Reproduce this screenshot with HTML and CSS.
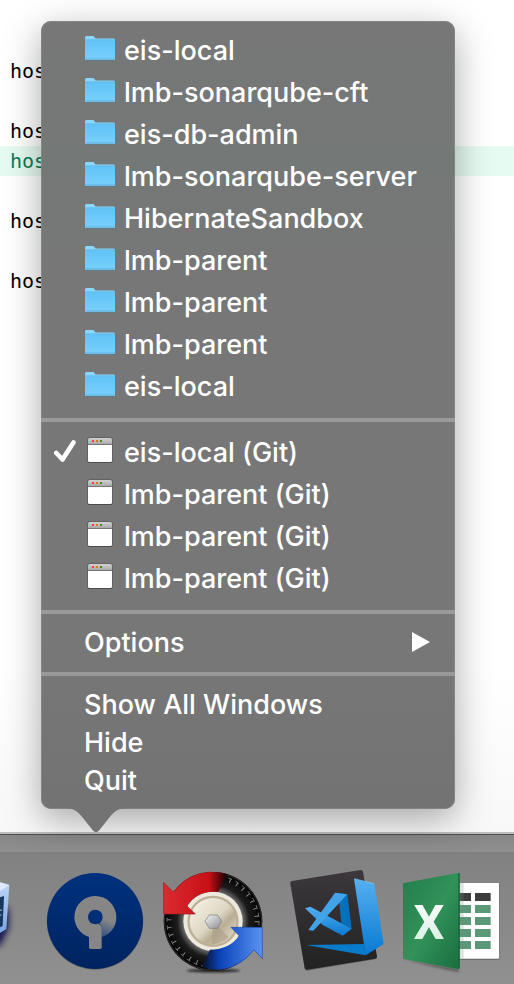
FILE: index.html
```
<!DOCTYPE html>
<html lang="en">
<head>
  <meta charset="UTF-8">
  <meta name="viewport" content="width=device-width, initial-scale=1.0">
  <title>Dock menu</title>
  <link rel="stylesheet" href="styles.css">
</head>
<body>
  <!-- Shared icons -->
  <svg class="defs" width="0" height="0" aria-hidden="true">
    <defs>
      <linearGradient id="folderFill" x1="0" y1="0" x2="0" y2="1">
        <stop offset="0" stop-color="#61c3f7"/>
        <stop offset="1" stop-color="#79d0fb"/>
      </linearGradient>
      <linearGradient id="barFill" x1="0" y1="0" x2="0" y2="1">
        <stop offset="0" stop-color="#d2d2d2"/>
        <stop offset="1" stop-color="#a9a9a9"/>
      </linearGradient>
    </defs>
    <symbol id="folder" viewBox="0 0 30 26">
      <path d="M0 25V2.500Q0 1 1.500 1H7.500Q9 1 9.600 2.200L10.500 3.500H28.500Q30 3.500 30 5V25Z" fill="#8ad8fd"/>
      <path d="M0 5.500H30V24Q30 25 29 25H1Q0 25 0 24Z" fill="url(#folderFill)"/>
      <path d="M0 5H30" stroke="#55b0e2" stroke-width="1"/>
      <path d="M0 23.500H30" stroke="#64b9e5" stroke-width="0.700"/>
      <path d="M0.500 25.200H29.500" stroke="#557d92" stroke-width="0.800"/>
    </symbol>
    <symbol id="window" viewBox="0 0 30 26">
      <rect x="2.500" y="0.500" width="25" height="25.500" rx="2" fill="#4c4c4c"/>
      <path d="M3 8H27V23.500Q27 25 25.500 25H4.500Q3 25 3 23.500Z" fill="#fff"/>
      <path d="M3 7V2.500Q3 1 4.500 1H25.500Q27 1 27 2.500V7Z" fill="url(#barFill)"/>
      <path d="M3 7.500H27" stroke="#777" stroke-width="1"/>
      <rect x="7" y="3" width="2" height="2" fill="#ee3f4c"/>
      <rect x="11" y="3" width="2" height="2" fill="#d4781f"/>
      <rect x="15" y="3" width="2" height="2" fill="#4a8b17"/>
    </symbol>
  </svg>

  <main class="editor">
    <div class="code">
      <div class="line">host</div>
      <div class="line"></div>
      <div class="line">host</div>
      <div class="line added">host</div>
      <div class="line"></div>
      <div class="line">host</div>
      <div class="line"></div>
      <div class="line">host</div>
    </div>

    <nav class="menu">
      <div class="menu-group">
        <button class="item"><svg class="icon"><use href="#folder"/></svg>eis-local</button>
        <button class="item"><svg class="icon"><use href="#folder"/></svg>lmb-sonarqube-cft</button>
        <button class="item"><svg class="icon"><use href="#folder"/></svg>eis-db-admin</button>
        <button class="item"><svg class="icon"><use href="#folder"/></svg>lmb-sonarqube-server</button>
        <button class="item"><svg class="icon"><use href="#folder"/></svg>HibernateSandbox</button>
        <button class="item"><svg class="icon"><use href="#folder"/></svg>lmb-parent</button>
        <button class="item"><svg class="icon"><use href="#folder"/></svg>lmb-parent</button>
        <button class="item"><svg class="icon"><use href="#folder"/></svg>lmb-parent</button>
        <button class="item"><svg class="icon"><use href="#folder"/></svg>eis-local</button>
      </div>
      <div class="menu-group">
        <button class="item checked">
          <svg class="check" viewBox="0 0 22 24"><path d="M2.300 14L8.500 20.500L19.500 3.500" fill="none" stroke="#fff" stroke-width="4.600" stroke-linecap="round" stroke-linejoin="round"/></svg>
          <svg class="icon"><use href="#window"/></svg>eis-local (Git)
        </button>
        <button class="item"><svg class="icon"><use href="#window"/></svg>lmb-parent (Git)</button>
        <button class="item"><svg class="icon"><use href="#window"/></svg>lmb-parent (Git)</button>
        <button class="item"><svg class="icon"><use href="#window"/></svg>lmb-parent (Git)</button>
      </div>
      <div class="menu-group">
        <button class="item plain">Options
          <svg class="more" viewBox="0 0 18 20"><path d="M0 0L18 10L0 20Z" fill="#fff"/></svg>
        </button>
      </div>
      <div class="menu-group">
        <button class="item plain">Show All Windows</button>
        <button class="item plain">Hide</button>
        <button class="item plain">Quit</button>
      </div>
      <svg class="pointer" viewBox="0 0 64 25"><path d="M0 0C11 0 14 4 19 10L29 22.500Q32 26 35 22.500L45 10C50 4 53 0 64 0Z" fill="#737373"/></svg>
    </nav>
  </main>

  <footer class="dock">
    <div class="shelf">
      <!-- VirtualBox -->
      <svg class="app" viewBox="-246 0 354 372">
        <defs>
          <linearGradient id="vbSide" x1="0" y1="0" x2="0" y2="1">
            <stop offset="0" stop-color="#c5dbf8"/>
            <stop offset="1" stop-color="#6f9ce4"/>
          </linearGradient>
          <filter id="soft" x="-50%" y="-50%" width="200%" height="200%"><feGaussianBlur stdDeviation="9"/></filter>
        </defs>
        <path d="M-90 240L0 258L26 205V150L0 130Z" fill="#151550" filter="url(#soft)"/>
        <path d="M-130 90L-60 50L28 75L19 207L-50 250L-130 210Z" fill="url(#vbSide)"/>
        <path d="M-60 50L28 75L0 93L-110 85Z" fill="#dceafc"/>
        <path d="M-30 120L12 108L8 198L-30 215Z" fill="#17375c"/>
        <path d="M-20 155L5 150M-20 168L4 165" stroke="#8da6bc" stroke-width="4"/>
      </svg>

      <!-- SourceTree -->
      <svg class="app" viewBox="108 0 354 372">
        <defs>
          <linearGradient id="stFill" x1="0" y1="0" x2="0" y2="1">
            <stop offset="0" stop-color="#00317e"/>
            <stop offset="1" stop-color="#00235f"/>
          </linearGradient>
          <linearGradient id="stFade" x1="0.700" y1="0" x2="0.300" y2="1">
            <stop offset="0.200" stop-color="#868686"/>
            <stop offset="1" stop-color="#2f4d82"/>
          </linearGradient>
        </defs>
        <circle cx="285" cy="184" r="145" fill="#6b6b6b"/>
        <circle cx="285" cy="183" r="144" fill="url(#stFill)"/>
        <path d="M286 108A63 63 0 0 0 267 231L286 215L304 171L349 171A63 63 0 0 0 286 108Z" fill="#868686"/>
        <path d="M286 170H349A63 63 0 0 1 304 232V200Z" fill="url(#stFade)"/>
        <path d="M267 190H289Q305 193 305 208V262Q305 267 300 267H272Q267 267 267 262Z" fill="#868686"/>
        <circle cx="286" cy="171" r="22" fill="#002e77"/>
      </svg>

      <!-- Beyond Compare -->
      <svg class="app" viewBox="12 0 354 372">
        <defs>
          <linearGradient id="redArrow" x1="0" y1="0" x2="1" y2="0">
            <stop offset="0" stop-color="#d92b31"/>
            <stop offset="0.720" stop-color="#c81016"/>
            <stop offset="1" stop-color="#160204"/>
          </linearGradient>
          <linearGradient id="blueArrow" x1="0" y1="0" x2="1" y2="0">
            <stop offset="0" stop-color="#06102a"/>
            <stop offset="0.300" stop-color="#0b44bb"/>
            <stop offset="1" stop-color="#5b93f2"/>
          </linearGradient>
          <radialGradient id="tyre">
            <stop offset="0.600" stop-color="#6a6a6a"/>
            <stop offset="0.730" stop-color="#1c1c1c"/>
            <stop offset="1" stop-color="#020202"/>
          </radialGradient>
          <linearGradient id="hub" x1="0" y1="0" x2="1" y2="1">
            <stop offset="0" stop-color="#f9f6ec"/>
            <stop offset="0.500" stop-color="#ddd6c2"/>
            <stop offset="0.650" stop-color="#b9ae94"/>
            <stop offset="1" stop-color="#eee9dc"/>
          </linearGradient>
          <linearGradient id="nut" x1="0" y1="0" x2="1" y2="1">
            <stop offset="0" stop-color="#f6f6f6"/>
            <stop offset="1" stop-color="#8e8e94"/>
          </linearGradient>
          <filter id="small" x="-30%" y="-100%" width="160%" height="300%"><feGaussianBlur stdDeviation="3"/></filter>
        </defs>
        <ellipse cx="190" cy="332" rx="80" ry="5" fill="#1c1c1c" filter="url(#small)"/>
        <circle cx="189" cy="184" r="148" fill="url(#tyre)"/>
        <circle cx="189" cy="184" r="146" fill="none" stroke="#444" stroke-width="2"/>
        <circle cx="189" cy="184" r="131" fill="none" stroke="#8a8a8a" stroke-width="12" stroke-dasharray="3 20"/>
        <circle cx="189" cy="184" r="138" fill="none" stroke="#777" stroke-width="3" stroke-dasharray="12 12"/>
        <circle cx="189" cy="184" r="89" fill="#eee9dd"/>
        <circle cx="189" cy="184" r="77" fill="#bcb196"/>
        <circle cx="189" cy="184" r="70" fill="url(#hub)"/>
        <path d="M189 184L236 232Q215 252 185 253Z" fill="#a99d83" opacity="0.600"/>
        <path d="M178 165H203L215 184L203 205H178L165 184Z" fill="url(#nut)" stroke="#777" stroke-width="2"/>
        <path d="M41 67L70 96Q113 38 184 36Q214 35 230 43L205 96Q140 90 111 138L136 162H41Z" fill="url(#redArrow)"/>
        <path d="M184 36Q113 38 70 96L41 67V162H136L111 138" fill="none" stroke="#981c20" stroke-width="2"/>
        <path d="M337 296L312 269Q274 320 211 328Q180 331 157 320L180 269Q240 267 267 227L243 202H337Z" fill="url(#blueArrow)"/>
        <path d="M211 328Q274 320 312 269L337 296V202H243L267 227" fill="none" stroke="#214aaa" stroke-width="2"/>
      </svg>

      <!-- VS Code -->
      <svg class="app" viewBox="-24 0 354 372">
        <defs>
          <linearGradient id="codeDark" x1="0" y1="0" x2="0" y2="1">
            <stop offset="0" stop-color="#3c383c"/>
            <stop offset="1" stop-color="#222"/>
          </linearGradient>
          <linearGradient id="codeBlue" x1="0" y1="0" x2="0" y2="1">
            <stop offset="0" stop-color="#56b0f0"/>
            <stop offset="1" stop-color="#087ad2"/>
          </linearGradient>
        </defs>
        <path d="M36 66L240 32Q248 31 249 38L291 292Q291 297 286 298L82 332Q75 333 74 326L31 72Q31 67 36 66Z" fill="#555" opacity="0.600"/>
        <path d="M36 63L241 30Q248 29 249 36L291 290Q291 295 286 296L82 329Q75 330 74 323L31 70Q30 64 36 63Z" fill="url(#codeDark)"/>
        <path d="M165 98L202 103L215 206L184 190L178 130Z" fill="#0870bb"/>
        <path d="M75 145L91 140L215 206L188 227L128 195Z" fill="url(#codeBlue)"/>
        <path d="M165 98L202 103L100 212L85 210Z" fill="#42a3e9"/>
        <path d="M78 255L252 252L257 286Z" fill="#087ccb"/>
        <path d="M222 56L283 71L311 252L257 286Z" fill="url(#codeBlue)"/>
        <path d="M222 56L283 71" stroke="#80c8f7" stroke-width="2"/>
      </svg>

      <!-- Excel -->
      <svg class="app" viewBox="0 0 354 372">
        <defs>
          <linearGradient id="xlGreen" x1="0" y1="0" x2="1" y2="1">
            <stop offset="0" stop-color="#207e4b"/>
            <stop offset="0.500" stop-color="#329259"/>
            <stop offset="1" stop-color="#196d3e"/>
          </linearGradient>
          <linearGradient id="xlText" x1="0" y1="0" x2="0" y2="1">
            <stop offset="0" stop-color="#fff"/>
            <stop offset="1" stop-color="#d3eee0"/>
          </linearGradient>
        </defs>
        <path d="M39 297L205 328L207 336Q150 326 39 297Z" fill="#555" filter="url(#small)"/>
        <rect x="200" y="71" width="128" height="228" rx="2" fill="#646464"/>
        <rect x="200" y="69" width="127" height="227" rx="2" fill="#fff"/>
        <path d="M200 99H243V123H200ZM255 99H302V123H255Z" fill="#3c3c3c"/>
        <path d="M200 135H243V159H200ZM255 135H302V159H255ZM200 171H243V195H200ZM255 171H302V195H255ZM200 207H243V231H200ZM255 207H302V231H255ZM200 243H243V267H200ZM255 243H302V267H255Z" fill="#5a9878"/>
        <path d="M208 69H221V296H208Z" fill="#888" opacity="0.250"/>
        <path d="M39 70L205 38Q209 38 209 42V323Q209 328 204 327L39 297Z" fill="url(#xlGreen)"/>
        <path d="M207 40V325" stroke="#176338" stroke-width="4"/>
        <text class="excel-letter" x="117" y="236" text-anchor="middle" fill="url(#xlText)">X</text>
      </svg>
    </div>
  </footer>
</body>
</html>
```
FILE: styles.css
```
/* General styles */
* {
  box-sizing: border-box;
}

body {
  margin: 0;
  min-height: 100vh;
  display: flex;
  flex-direction: column;
  background: #fff;
  overflow-x: hidden;
}

.defs {
  position: absolute;
}

/* Editor behind the menu */
.editor {
  position: relative;
  flex: 1;
  min-height: 832px;
  padding-top: 56px;
  background: linear-gradient(to bottom, #fff 80%, #f8f8f8);
}

.line {
  height: 30px;
  padding-left: 10px;
  font-family: "DejaVu Sans Mono", monospace;
  font-size: 20px;
  line-height: 30px;
  color: #000;
}

.line.added {
  background: #e6fbf1;
  color: #067a58;
}

/* Menu */
.menu {
  position: absolute;
  left: 41px;
  right: 59px;
  bottom: 23px;
  padding: 8px 0 10px;
  border-radius: 10px;
  background: linear-gradient(to bottom, #777, #747877 18%, #777 32%, #777 80%, #737373);
  box-shadow: inset 0 0 0 1px #858585, 0 10px 36px rgba(0, 0, 0, 0.34);
}

.menu-group + .menu-group {
  margin-top: 11px;
  padding-top: 9px;
  border-top: 4px solid #999;
}

.item {
  position: relative;
  display: flex;
  align-items: center;
  width: 100%;
  height: 42px;
  padding: 0 25px 0 44px;
  border: 0;
  background: none;
  color: #fff;
  font-family: Inter, "Liberation Sans", sans-serif;
  font-size: 27px;
  font-weight: 500;
  text-align: left;
  white-space: nowrap;
}

.item.plain {
  height: 38px;
  padding-left: 43px;
  justify-content: space-between;
}

.item:hover {
  background: rgba(255, 255, 255, 0.1);
}

.icon {
  width: 30px;
  height: 26px;
  margin: 0 9px 4px 0;
}

.check {
  position: absolute;
  left: 13px;
  top: 8px;
  width: 22px;
  height: 24px;
}

.more {
  width: 18px;
  height: 20px;
}

.pointer {
  position: absolute;
  left: 23px;
  top: 100%;
  width: 64px;
  height: 25px;
  margin-top: -1px;
}

/* Dock */
.dock {
  padding-top: 18px;
  border-top: 2px solid #bdbdbd;
  background: linear-gradient(to bottom, #505050 1px, #868686 1px, #909090 19px);
  overflow: hidden;
}

.shelf {
  display: flex;
  height: 132px;
  padding-top: 8px;
  background: linear-gradient(to bottom, #818181, #909090);
}

.app {
  flex: none;
  width: 118px;
  height: 124px;
}

.app:first-child {
  margin-left: -82px;
}

.excel-letter {
  font-family: Roboto, "Liberation Sans", sans-serif;
  font-size: 146px;
  font-weight: 700;
}
```
